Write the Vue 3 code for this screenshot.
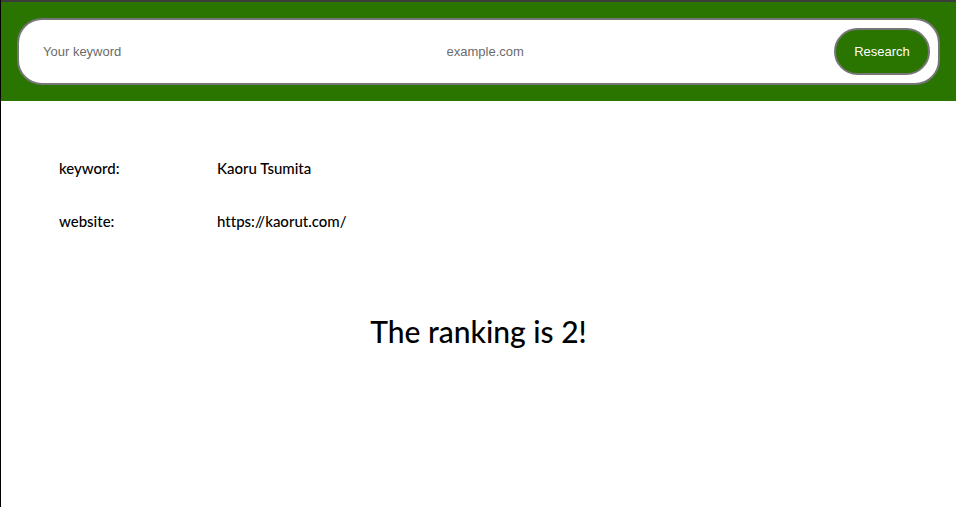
<script setup>
import { ref } from 'vue'

const keyword = ref('')
const site = ref('')
const result = {
  keyword: 'Kaoru Tsumita',
  website: 'https://kaorut.com/',
  ranking: 2,
}
</script>

<template>
  <div class="page">
    <header class="header">
      <form class="search" @submit.prevent>
        <input v-model="keyword" class="field" type="text" placeholder="Your keyword" aria-label="Your keyword" />
        <input v-model="site" class="field" type="text" placeholder="example.com" aria-label="Website" />
        <button class="submit" type="submit">Research</button>
      </form>
    </header>
    <main class="result">
      <dl class="details">
        <dt>keyword:</dt>
        <dd>{{ result.keyword }}</dd>
        <dt>website:</dt>
        <dd>{{ result.website }}</dd>
      </dl>
      <p class="ranking">The ranking is {{ result.ranking }}!</p>
    </main>
  </div>
</template>

<style>
body {
  margin: 0;
  background: #fff;
}
</style>

<style scoped>
.page {
  box-sizing: border-box;
  min-height: 100vh;
  border-left: 1px solid #000;
  color: #000;
  font-family: "Gill Sans", Lato, sans-serif;
  font-weight: 500;
  font-variant-ligatures: none;
}

.header {
  padding: 16px;
  border-top: 2px solid #3c3c3c;
  background: #2a7400;
}

.search {
  display: flex;
  padding: 8px;
  border: 2px solid #767676;
  border-radius: 25px;
  background: #fff;
}

.field {
  box-sizing: border-box;
  flex: 1;
  min-width: 0;
  padding: 0 16px;
  border: 0;
  outline: 0;
  background: transparent;
  color: #000;
  font: 13px "Liberation Sans", Arial, sans-serif;
}

.field::placeholder {
  color: #6b6b6b;
  opacity: 1;
}

.submit {
  box-sizing: border-box;
  width: 96px;
  height: 47px;
  padding: 0;
  border: 2px solid #767676;
  border-radius: 25px;
  background: #2a7400;
  color: #fff;
  font: 13px "Liberation Sans", Arial, sans-serif;
  cursor: pointer;
}

.result {
  padding: 57px 58px;
}

.details {
  display: grid;
  grid-template-columns: 158px 1fr;
  row-gap: 33px;
  margin: 0;
  font-size: 15px;
  line-height: 20px;
}

.details dd {
  margin: 0;
}

.ranking {
  margin: 80px 0 0;
  font-size: 30px;
  line-height: 40px;
  text-align: center;
}
</style>
